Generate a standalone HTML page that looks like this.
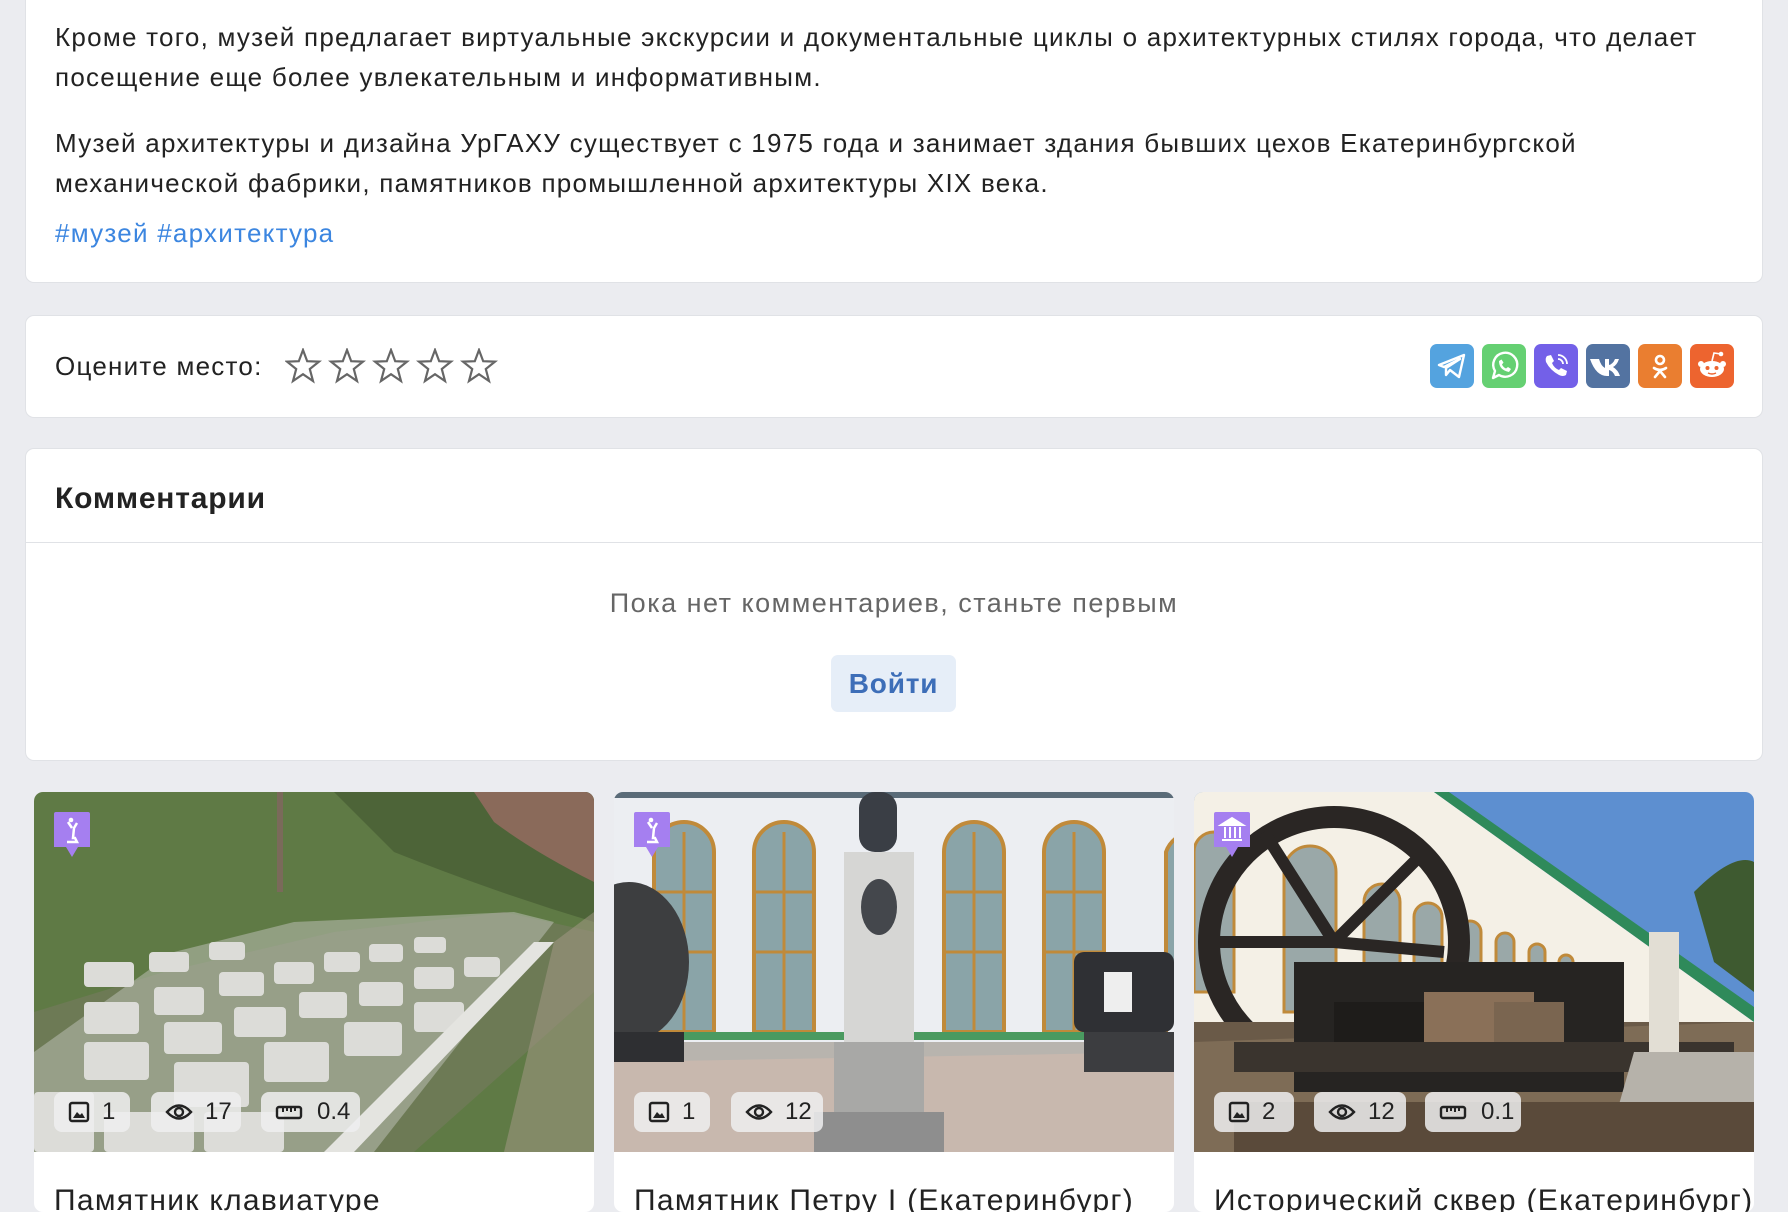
<!DOCTYPE html>
<html><head><meta charset="utf-8"><style>
*{box-sizing:border-box;margin:0;padding:0}
body{width:1788px;height:1194px;overflow:hidden;background:#ebecf0;font-family:"Liberation Sans",Arial,sans-serif;color:#222;position:relative}
.card{position:absolute;background:#fff;border:1px solid #e0e2e6;border-radius:9px}
.t{position:absolute;left:55px;font-size:26px;white-space:nowrap;letter-spacing:1.25px}
.soc{position:absolute;top:344px;width:44px;height:44px;border-radius:7px}
.soc svg{width:44px;height:44px}
.pc{position:absolute;top:792px;width:560px;height:420px;background:#fff;border-radius:9px;overflow:hidden}
.pc svg.img{position:absolute;left:0;top:0;width:560px;height:360px}
.bd{position:absolute;top:300px;height:40px;border-radius:8px;background:rgba(238,238,240,.85);font-size:24px;line-height:40px;color:#222;padding-left:48px}
.bd svg{position:absolute;left:14px;top:9px}
.mk{position:absolute;left:20px;top:20px;width:36px;height:45px}
.ttl{position:absolute;left:20px;top:392px;font-size:30px;white-space:nowrap;letter-spacing:1.3px}
</style></head><body>

<div class="card" style="left:25px;top:-10px;width:1738px;height:293px"></div>
<div class="t" style="top:22px">Кроме того, музей предлагает виртуальные экскурсии и документальные циклы о архитектурных стилях города, что делает</div>
<div class="t" style="top:62px">посещение еще более увлекательным и информативным.</div>
<div class="t" style="top:128px">Музей архитектуры и дизайна УрГАХУ существует с 1975 года и занимает здания бывших цехов Екатеринбургской</div>
<div class="t" style="top:168px">механической фабрики, памятников промышленной архитектуры XIX века.</div>
<div class="t" style="top:218px;color:#3c86e0">#музей #архитектура</div>

<div class="card" style="left:25px;top:315px;width:1738px;height:103px"></div>
<div class="t" style="top:351px">Оцените место:</div>
<svg style="position:absolute;left:285px;top:348px" width="220" height="36" viewBox="0 0 220 36">
<g fill="none" stroke="#666" stroke-width="2.2" stroke-linejoin="miter">
<path id="st" d="M18 2 L22.2 13.2 L34 13.6 L24.8 21 L28 33 L18 26.2 L8 33 L11.2 21 L2 13.6 L13.8 13.2 Z"/>
<use href="#st" x="44"/><use href="#st" x="88"/><use href="#st" x="132"/><use href="#st" x="176"/>
</g></svg>

<div class="soc" style="left:1430px;background:#54a3df"><svg viewBox="0 0 44 44"><path d="M9 21 L34 11 L29 33 L20 26 L16 31 L16 24 L30 15 L14 23 Z" fill="none" stroke="#fff" stroke-width="2.4" stroke-linejoin="round"/></svg></div>
<div class="soc" style="left:1482px;background:#65d072"><svg viewBox="0 0 44 44"><path d="M11 34 L13 27 A12 12 0 1 1 17 31 Z" fill="none" stroke="#fff" stroke-width="2.4" stroke-linejoin="round"/><path d="M17 17 q0 9 10 11 l2 -3 l-3 -2 l-2 1.5 q-3-1.5-4-4 l1.5-2 l-2-3 z" fill="#fff"/></svg></div>
<div class="soc" style="left:1534px;background:#7360e8"><svg viewBox="0 0 44 44"><path d="M13 12 l4 -1 l3 6 l-2 2 q2 5 7 7 l2 -2 l6 3 l-1 4 q-3 2 -7 0 q-9 -5 -13 -13 q-1 -4 1 -6z" fill="#fff"/><path d="M24 11 a9 9 0 0 1 9 9 M24 15 a5 5 0 0 1 5 5" fill="none" stroke="#fff" stroke-width="1.8"/></svg></div>
<div class="soc" style="left:1586px;background:#5373a1"><svg viewBox="0 0 44 44"><path d="M8 15 h5 q2 7 6 9 v-9 h4 v6 q4-1 6-6 h4 q-2 6-6 8 q5 3 7 9 h-5 q-2-5-6-6 v6 h-2 q-11 0-17-17z" fill="#fff"/></svg></div>
<div class="soc" style="left:1638px;background:#ea7e30"><svg viewBox="0 0 44 44"><circle cx="22" cy="16" r="4" fill="none" stroke="#fff" stroke-width="2.6"/><path d="M16 24 q6 4 12 0 M22 27 l-5 6 M22 27 l5 6" fill="none" stroke="#fff" stroke-width="2.6" stroke-linecap="round"/></svg></div>
<div class="soc" style="left:1690px;background:#ed642f"><svg viewBox="0 0 44 44"><ellipse cx="22" cy="25" rx="12" ry="8" fill="#fff"/><circle cx="11" cy="20" r="3" fill="#fff"/><circle cx="33" cy="20" r="3" fill="#fff"/><circle cx="31" cy="10" r="2.3" fill="#fff"/><path d="M22 17 L24 9 L31 10" fill="none" stroke="#fff" stroke-width="1.6"/><circle cx="17.5" cy="24" r="2" fill="#ed642f"/><circle cx="26.5" cy="24" r="2" fill="#ed642f"/><path d="M18 29 q4 2 8 0" fill="none" stroke="#ed642f" stroke-width="1.4"/></svg></div>

<div class="card" style="left:25px;top:448px;width:1738px;height:313px"></div>
<div style="position:absolute;left:55px;top:482px;font-size:30px;font-weight:bold;color:#222;letter-spacing:0.8px">Комментарии</div>
<div style="position:absolute;left:26px;top:542px;width:1736px;height:1px;background:#e0e2e6"></div>
<div style="position:absolute;left:0;width:1788px;top:588px;text-align:center;font-size:27px;color:#666;letter-spacing:1.5px">Пока нет комментариев, станьте первым</div>
<div style="position:absolute;left:831px;top:655px;width:125px;height:57px;border-radius:7px;background:#e6eef8;color:#3d6eb8;font-size:28px;line-height:57px;text-align:center;font-weight:bold;letter-spacing:0.8px">Войти</div>

<!-- card 1 -->
<div class="pc" style="left:34px">
<svg class="img" viewBox="0 0 560 360" preserveAspectRatio="none">
<rect width="560" height="360" fill="#5f7a45"/>
<path d="M300 0 H560 V130 Q460 100 360 60 Z" fill="#4d6438"/>
<path d="M440 0 H560 V90 Q500 60 460 30Z" fill="#8a6a5a"/>
<rect x="243" y="0" width="6" height="100" fill="#7a6a5a"/>
<path d="M0 220 L130 180 L300 140 L470 120 L560 140 L560 200 L380 360 L0 360 Z" fill="#6d7a55"/>
<path d="M0 260 L140 160 L260 130 L480 120 L520 130 L340 360 L0 360Z" fill="#b9bdb2" opacity=".55"/>
<g fill="#dcdcd8">
<rect x="50" y="170" width="50" height="25" rx="4"/><rect x="115" y="160" width="40" height="20" rx="4"/><rect x="175" y="150" width="36" height="18" rx="4"/>
<rect x="50" y="210" width="55" height="32" rx="4"/><rect x="120" y="195" width="50" height="28" rx="4"/><rect x="185" y="180" width="45" height="24" rx="4"/><rect x="240" y="170" width="40" height="22" rx="4"/><rect x="290" y="160" width="36" height="20" rx="4"/><rect x="335" y="152" width="34" height="18" rx="4"/><rect x="380" y="145" width="32" height="16" rx="4"/>
<rect x="50" y="250" width="65" height="38" rx="4"/><rect x="130" y="230" width="58" height="32" rx="4"/><rect x="200" y="215" width="52" height="30" rx="4"/><rect x="265" y="200" width="48" height="26" rx="4"/><rect x="325" y="190" width="44" height="24" rx="4"/><rect x="380" y="175" width="40" height="22" rx="4"/><rect x="430" y="165" width="36" height="20" rx="4"/>
<rect x="140" y="270" width="75" height="45" rx="4"/><rect x="230" y="250" width="65" height="40" rx="4"/><rect x="310" y="230" width="58" height="34" rx="4"/><rect x="380" y="210" width="50" height="30" rx="4"/>
<rect x="0" y="300" width="60" height="60" rx="4"/><rect x="70" y="320" width="90" height="40" rx="4"/><rect x="170" y="320" width="80" height="40" rx="4"/>
</g>
<path d="M290 360 L500 150 L520 150 L320 360Z" fill="#e4e4e0"/>
<path d="M520 150 L560 120 L560 360 L470 360Z" fill="#a89a8a" opacity=".5"/>
</svg>
<svg class="mk" viewBox="0 0 36 45"><path d="M2 0 H34 Q36 0 36 2 V35 H24 L18 45 L12 35 H0 V2 Q0 0 2 0Z" fill="#a57ff0"/><path d="M13 30 h10 l-2-4 h-2 l1-10 l3-5 M18 16 l-4-6" fill="none" stroke="#fff" stroke-width="2.5"/><circle cx="17" cy="8" r="2.3" fill="#fff"/></svg>
<div class="bd" style="left:20px;width:76px"><svg width="22" height="22" viewBox="0 0 22 22"><rect x="2" y="2" width="18" height="18" rx="2" fill="none" stroke="#222" stroke-width="2.4"/><path d="M5 17 L9 11 L12 14 L14 12 L17 17Z" fill="#222"/></svg>1</div>
<div class="bd" style="left:117px;width:90px;padding-left:54px"><svg width="28" height="22" viewBox="0 0 28 22"><path d="M2 11 Q14 -2 26 11 Q14 24 2 11Z" fill="none" stroke="#222" stroke-width="2.4"/><circle cx="14" cy="11" r="4" fill="none" stroke="#222" stroke-width="2.4"/></svg>17</div>
<div class="bd" style="left:227px;width:99px;padding-left:56px"><svg width="28" height="22" viewBox="0 0 28 22"><rect x="2" y="6" width="24" height="11" rx="2" fill="none" stroke="#222" stroke-width="2.4"/><path d="M8 6v5M12 6v4M16 6v5M20 6v4" stroke="#222" stroke-width="2"/></svg>0.4</div>
<div class="ttl">Памятник клавиатуре</div>
</div>

<!-- card 2 -->
<div class="pc" style="left:614px">
<svg class="img" viewBox="0 0 560 360" preserveAspectRatio="none">
<rect width="560" height="360" fill="#eceef2"/>
<rect x="0" y="0" width="560" height="6" fill="#5a6b78"/>
<g fill="#8aa4a8" stroke="#c08a3a" stroke-width="4">
<path d="M40 240 V60 A30 30 0 0 1 100 60 V240Z"/>
<path d="M140 240 V60 A30 30 0 0 1 200 60 V240Z"/>
<path d="M330 240 V60 A30 30 0 0 1 390 60 V240Z"/>
<path d="M430 240 V60 A30 30 0 0 1 490 60 V240Z"/>
<path d="M552 240 V60 A30 30 0 0 1 580 40"/>
</g>
<g stroke="#c08a3a" stroke-width="3"><path d="M70 40V240M170 40V240M360 40V240M460 40V240M40 100H100M40 160H100M140 100H200M140 160H200M330 100H390M330 160H390M430 100H490M430 160H490"/></g>
<rect x="0" y="240" width="560" height="8" fill="#4a9a60"/>
<rect x="0" y="250" width="560" height="110" fill="#b8b4ae"/>
<path d="M0 270 L560 260 V360 H0Z" fill="#c8b8ae"/>
<rect x="245" y="0" width="38" height="60" rx="16" fill="#3a3e45"/>
<rect x="230" y="60" width="70" height="200" fill="#d6d6d4"/>
<ellipse cx="265" cy="115" rx="18" ry="28" fill="#44474c"/>
<rect x="220" y="250" width="90" height="70" fill="#a8a8a6"/>
<rect x="200" y="320" width="130" height="40" fill="#8e8e8e"/>
<ellipse cx="15" cy="170" rx="60" ry="80" fill="#3d3e40"/>
<rect x="0" y="240" width="70" height="30" fill="#2e2f32"/>
<rect x="460" y="160" width="100" height="80" rx="10" fill="#2f3034"/>
<rect x="470" y="240" width="90" height="40" fill="#3c3d40"/>
<rect x="490" y="180" width="28" height="40" fill="#eee"/>
</svg>
<svg class="mk" viewBox="0 0 36 45"><path d="M2 0 H34 Q36 0 36 2 V35 H24 L18 45 L12 35 H0 V2 Q0 0 2 0Z" fill="#a57ff0"/><path d="M13 30 h10 l-2-4 h-2 l1-10 l3-5 M18 16 l-4-6" fill="none" stroke="#fff" stroke-width="2.5"/><circle cx="17" cy="8" r="2.3" fill="#fff"/></svg>
<div class="bd" style="left:20px;width:76px"><svg width="22" height="22" viewBox="0 0 22 22"><rect x="2" y="2" width="18" height="18" rx="2" fill="none" stroke="#222" stroke-width="2.4"/><path d="M5 17 L9 11 L12 14 L14 12 L17 17Z" fill="#222"/></svg>1</div>
<div class="bd" style="left:117px;width:92px;padding-left:54px"><svg width="28" height="22" viewBox="0 0 28 22"><path d="M2 11 Q14 -2 26 11 Q14 24 2 11Z" fill="none" stroke="#222" stroke-width="2.4"/><circle cx="14" cy="11" r="4" fill="none" stroke="#222" stroke-width="2.4"/></svg>12</div>
<div class="ttl">Памятник Петру I (Екатеринбург)</div>
</div>

<!-- card 3 -->
<div class="pc" style="left:1194px">
<svg class="img" viewBox="0 0 560 360" preserveAspectRatio="none">
<rect width="560" height="360" fill="#5d8fd0"/>
<path d="M0 0 H240 L560 230 V360 H0Z" fill="#f4f0e6"/>
<path d="M240 0 L560 230 L560 215 L255 0Z" fill="#2f8a5a"/>
<path d="M500 100 Q540 60 560 70 V200 L520 170Z" fill="#3e5a30"/>
<g fill="#9aa8a8" stroke="#c08a3a" stroke-width="3">
<path d="M90 220 V80 A26 26 0 0 1 142 80 V220Z"/>
<path d="M170 210 V110 A18 18 0 0 1 206 110 V210Z"/>
<path d="M220 200 V125 A14 14 0 0 1 248 125 V200Z"/>
<path d="M265 195 V140 A11 11 0 0 1 287 140 V195Z"/>
<path d="M302 190 V150 A9 9 0 0 1 320 150 V190Z"/>
<path d="M335 185 V160 A8 8 0 0 1 351 160 V185Z"/>
<path d="M365 185 V170 A7 7 0 0 1 379 170 V185Z"/>
<path d="M0 200 V60 A20 20 0 0 1 40 60 V200Z"/>
</g>
<circle cx="140" cy="150" r="125" fill="none" stroke="#2a2624" stroke-width="22"/>
<path d="M140 150 L70 40 M140 150 L230 60 M140 150 L20 150 M140 150 L250 160" stroke="#2a2624" stroke-width="12"/>
<rect x="0" y="230" width="560" height="130" fill="#6a5a48"/>
<path d="M0 250 L560 230 V360 H0Z" fill="#7e6c56"/>
<rect x="100" y="170" width="330" height="130" fill="#262422"/>
<rect x="140" y="210" width="120" height="60" fill="#1e1c1a"/>
<rect x="230" y="200" width="110" height="60" fill="#8a7058"/>
<rect x="300" y="210" width="70" height="50" fill="#7a6550"/>
<rect x="40" y="250" width="500" height="30" fill="#3a342e"/>
<rect x="455" y="140" width="30" height="120" fill="#e2ded4"/>
<path d="M440 260 H560 V330 H420Z" fill="#b6b2aa"/>
<rect x="40" y="310" width="520" height="50" fill="#5a4a3a"/>
</svg>
<svg class="mk" viewBox="0 0 36 45"><path d="M2 0 H34 Q36 0 36 2 V35 H24 L18 45 L12 35 H0 V2 Q0 0 2 0Z" fill="#a57ff0"/><path d="M7 13 L18 6 L29 13Z M8 28 h20 M11 15v11M16 15v11M21 15v11M26 15v11" fill="#fff" stroke="#fff" stroke-width="2"/></svg>
<div class="bd" style="left:20px;width:80px"><svg width="22" height="22" viewBox="0 0 22 22"><rect x="2" y="2" width="18" height="18" rx="2" fill="none" stroke="#222" stroke-width="2.4"/><path d="M5 17 L9 11 L12 14 L14 12 L17 17Z" fill="#222"/></svg>2</div>
<div class="bd" style="left:120px;width:92px;padding-left:54px"><svg width="28" height="22" viewBox="0 0 28 22"><path d="M2 11 Q14 -2 26 11 Q14 24 2 11Z" fill="none" stroke="#222" stroke-width="2.4"/><circle cx="14" cy="11" r="4" fill="none" stroke="#222" stroke-width="2.4"/></svg>12</div>
<div class="bd" style="left:231px;width:96px;padding-left:56px"><svg width="28" height="22" viewBox="0 0 28 22"><rect x="2" y="6" width="24" height="11" rx="2" fill="none" stroke="#222" stroke-width="2.4"/><path d="M8 6v5M12 6v4M16 6v5M20 6v4" stroke="#222" stroke-width="2"/></svg>0.1</div>
<div class="ttl">Исторический сквер (Екатеринбург)</div>
</div>

</body></html>
